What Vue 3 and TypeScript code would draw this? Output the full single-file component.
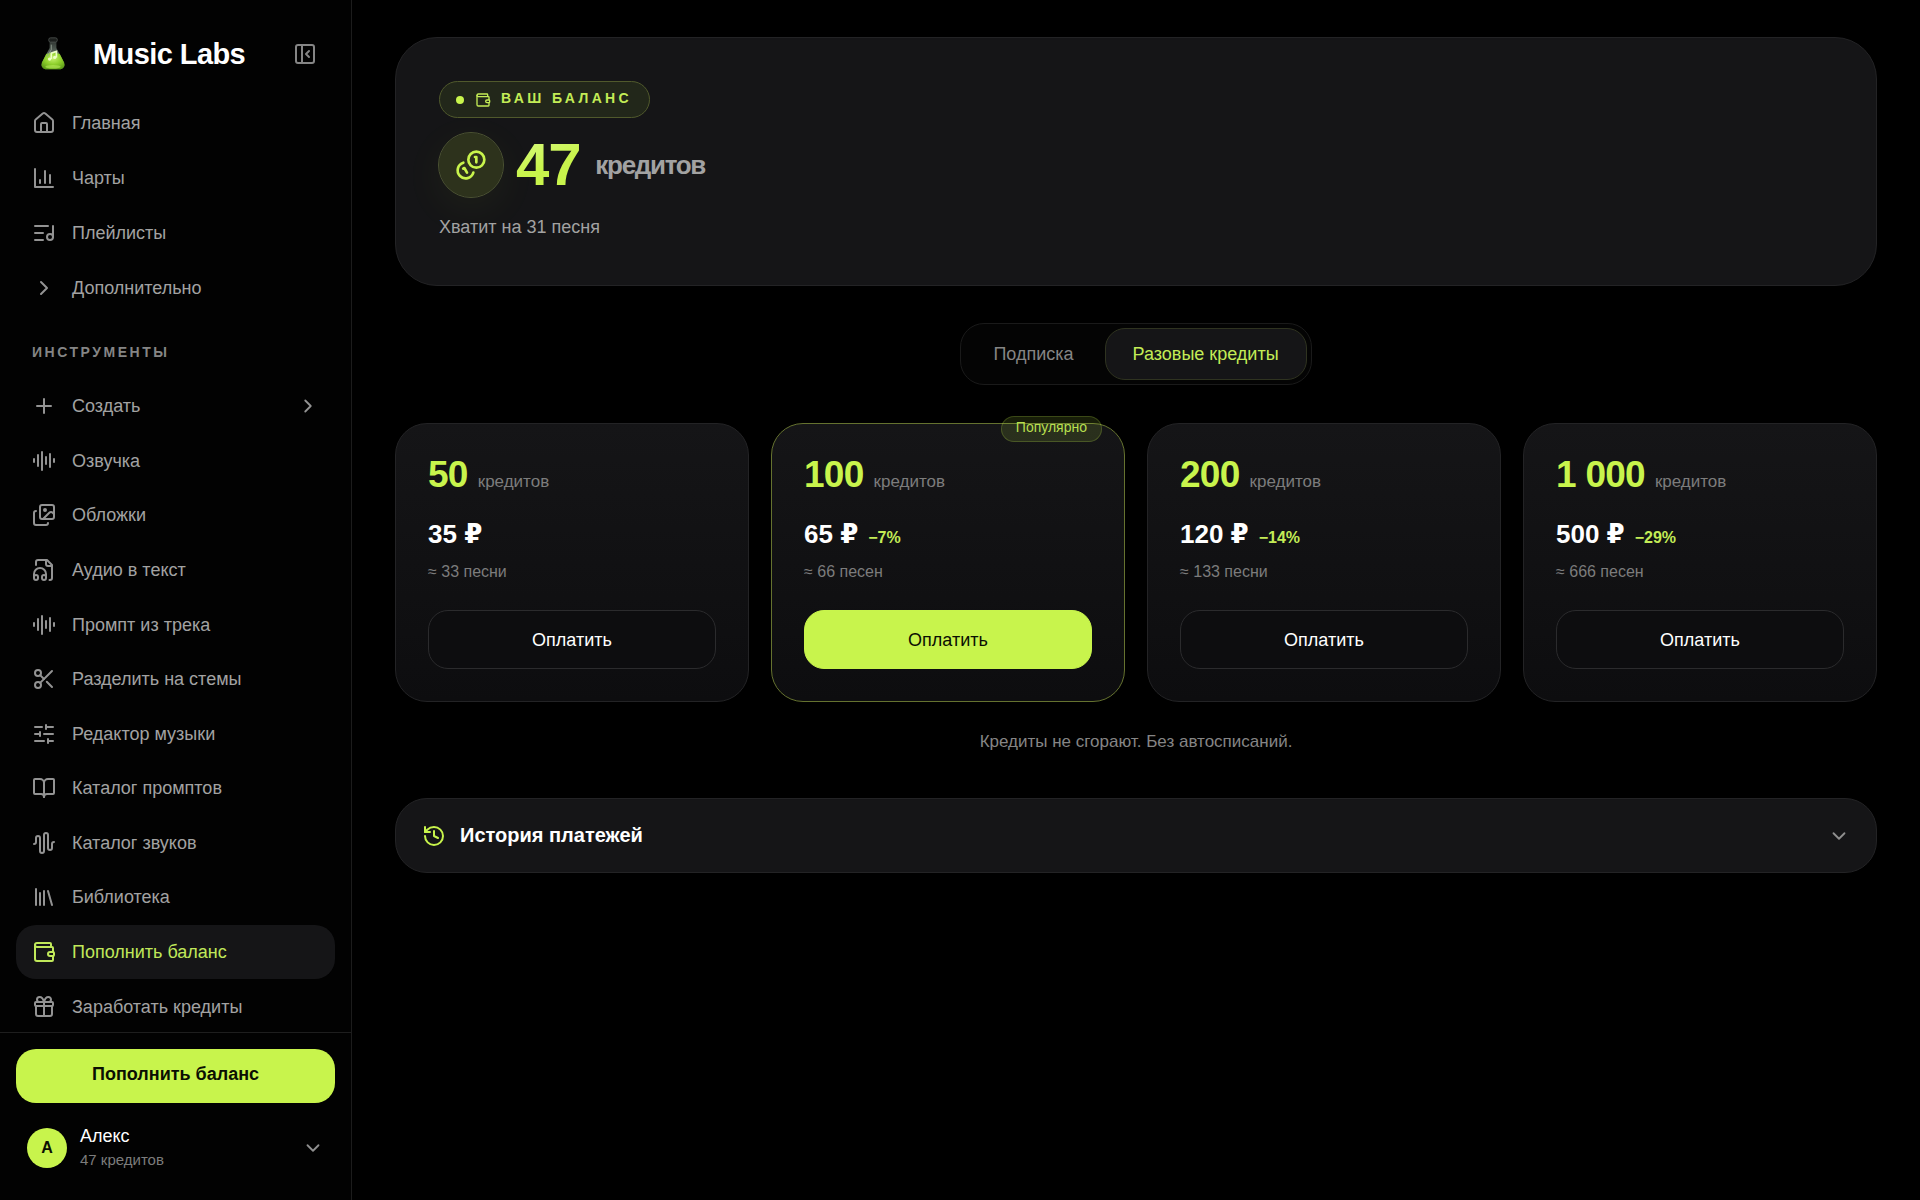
<script setup lang="ts">
import { ref } from 'vue'

interface NavItem {
  label: string
  icon: string
  active?: boolean
  expandable?: boolean
}

interface Plan {
  credits: string
  price: string
  discount?: string
  songs: string
  popular?: boolean
}

const icons: Record<string, string[]> = {
  home: [
    'M15 21v-8a1 1 0 0 0-1-1h-4a1 1 0 0 0-1 1v8',
    'M3 10a2 2 0 0 1 .709-1.528l7-5.999a2 2 0 0 1 2.582 0l7 5.999A2 2 0 0 1 21 10v9a2 2 0 0 1-2 2H5a2 2 0 0 1-2-2z',
  ],
  charts: ['M3 3v18h18', 'M18 17V9', 'M13 17V5', 'M8 17v-3'],
  playlists: ['M21 16V5', 'M11 12H3', 'M11 19H3', 'M16 5H3', 'M21 16a3 3 0 1 1-6 0 3 3 0 0 1 6 0z'],
  right: ['m9 18 6-6-6-6'],
  down: ['m6 9 6 6 6-6'],
  plus: ['M5 12h14', 'M12 5v14'],
  lines: ['M2 10v3', 'M6 6v11', 'M10 3v18', 'M14 8v7', 'M18 5v13', 'M22 10v3'],
  images: [
    'm22 11-1.296-1.296a2.4 2.4 0 0 0-3.408 0L11 16',
    'M4 8a2 2 0 0 0-2 2v10a2 2 0 0 0 2 2h10a2 2 0 0 0 2-2',
    'M14 7a1 1 0 1 1-2 0 1 1 0 0 1 2 0z',
    'M10 2h10a2 2 0 0 1 2 2v10a2 2 0 0 1-2 2H10a2 2 0 0 1-2-2V4a2 2 0 0 1 2-2z',
  ],
  fileAudio: [
    'M17.5 22h.5a2 2 0 0 0 2-2V7l-5-5H6a2 2 0 0 0-2 2v3',
    'M14 2v4a2 2 0 0 0 2 2h4',
    'M2 19a2 2 0 1 1 4 0v1a2 2 0 1 1-4 0v-4a6 6 0 0 1 12 0v4a2 2 0 1 1-4 0v-1a2 2 0 1 1 4 0',
  ],
  scissors: [
    'M9 6a3 3 0 1 1-6 0 3 3 0 0 1 6 0z',
    'M8.12 8.12 12 12',
    'M20 4 8.12 15.88',
    'M9 18a3 3 0 1 1-6 0 3 3 0 0 1 6 0z',
    'M14.8 14.8 20 20',
  ],
  sliders: ['M10 5H3', 'M12 19H3', 'M14 3v4', 'M16 17v4', 'M21 12h-9', 'M21 19h-5', 'M21 5h-7', 'M8 10v4', 'M8 12H3'],
  book: [
    'M12 7v14',
    'M3 18a1 1 0 0 1-1-1V4a1 1 0 0 1 1-1h5a4 4 0 0 1 4 4 4 4 0 0 1 4-4h5a1 1 0 0 1 1 1v13a1 1 0 0 1-1 1h-6a3 3 0 0 0-3 3 3 3 0 0 0-3-3z',
  ],
  waveform: [
    'M2 13a2 2 0 0 0 2-2V7a2 2 0 0 1 4 0v13a2 2 0 0 0 4 0V4a2 2 0 0 1 4 0v13a2 2 0 0 0 4 0v-4a2 2 0 0 1 2-2',
  ],
  library: ['m16 6 4 14', 'M12 6v14', 'M8 8v12', 'M4 4v16'],
  wallet: [
    'M19 7V4a1 1 0 0 0-1-1H5a2 2 0 0 0 0 4h15a1 1 0 0 1 1 1v4h-3a2 2 0 0 0 0 4h3a1 1 0 0 0 1-1v-2a1 1 0 0 0-1-1',
    'M3 5v14a2 2 0 0 0 2 2h15a1 1 0 0 0 1-1v-4',
  ],
  gift: [
    'M12 7v14',
    'M20 11v8a2 2 0 0 1-2 2H6a2 2 0 0 1-2-2v-8',
    'M7.5 7a1 1 0 0 1 0-5A4.8 8 0 0 1 12 7a4.8 8 0 0 1 4.5-5 1 1 0 0 1 0 5',
    'M4 7h16a1 1 0 0 1 1 1v2a1 1 0 0 1-1 1H4a1 1 0 0 1-1-1V8a1 1 0 0 1 1-1z',
  ],
  history: ['M3 12a9 9 0 1 0 9-9 9.75 9.75 0 0 0-6.74 2.74L3 8', 'M3 3v5h5', 'M12 7v5l4 2'],
  coins: [
    'M13.744 17.736a6 6 0 1 1-7.48-7.48',
    'M15 6h1v4',
    'm6.134 14.768.866-.5 2 3.464',
    'M22 8a6 6 0 1 1-12 0 6 6 0 0 1 12 0z',
  ],
  panel: ['M5 3h14a2 2 0 0 1 2 2v14a2 2 0 0 1-2 2H5a2 2 0 0 1-2-2V5a2 2 0 0 1 2-2z', 'M9 3v18', 'm16 15-3-3 3-3'],
}

const mainNav: NavItem[] = [
  { label: 'Главная', icon: 'home' },
  { label: 'Чарты', icon: 'charts' },
  { label: 'Плейлисты', icon: 'playlists' },
  { label: 'Дополнительно', icon: 'right' },
]

const tools: NavItem[] = [
  { label: 'Создать', icon: 'plus', expandable: true },
  { label: 'Озвучка', icon: 'lines' },
  { label: 'Обложки', icon: 'images' },
  { label: 'Аудио в текст', icon: 'fileAudio' },
  { label: 'Промпт из трека', icon: 'lines' },
  { label: 'Разделить на стемы', icon: 'scissors' },
  { label: 'Редактор музыки', icon: 'sliders' },
  { label: 'Каталог промптов', icon: 'book' },
  { label: 'Каталог звуков', icon: 'waveform' },
  { label: 'Библиотека', icon: 'library' },
  { label: 'Пополнить баланс', icon: 'wallet', active: true },
  { label: 'Заработать кредиты', icon: 'gift' },
]

const plans: Plan[] = [
  { credits: '50', price: '35', songs: '≈ 33 песни' },
  { credits: '100', price: '65', discount: '−7%', songs: '≈ 66 песен', popular: true },
  { credits: '200', price: '120', discount: '−14%', songs: '≈ 133 песни' },
  { credits: '1 000', price: '500', discount: '−29%', songs: '≈ 666 песен' },
]

const tabs = ['Подписка', 'Разовые кредиты']
const activeTab = ref(1)
</script>

<template>
  <div class="app">
    <aside class="sidebar">
      <header class="brand">
        <svg class="logo" viewBox="0 0 40 40" aria-hidden="true">
          <defs>
            <linearGradient id="glass" x1="0" y1="0" x2="0" y2="1">
              <stop offset="0" stop-color="#2b302d" />
              <stop offset="0.45" stop-color="#5d6a60" />
              <stop offset="1" stop-color="#4f7a22" />
            </linearGradient>
            <radialGradient id="liquid" cx="0.5" cy="0.35" r="0.7">
              <stop offset="0" stop-color="#c4f06a" />
              <stop offset="0.5" stop-color="#8fd02c" />
              <stop offset="1" stop-color="#5c9a18" />
            </radialGradient>
          </defs>
          <path d="M16 4h8v9l9 17q2 6-4 8H11q-6-2-4-8l9-17z" fill="url(#glass)" />
          <path d="M12 20q8-3 16 0l5 10q2 6-4 8H11q-6-2-4-8z" fill="url(#liquid)" />
          <rect x="15" y="1" width="10" height="5" rx="2" fill="#1c1f1d" stroke="#4c524e" />
          <path d="M18 9v6l-5 8" fill="none" stroke="#93a294" stroke-width="1" />
          <path d="M18 26v-7l6-2v7" fill="none" stroke="#edffc6" stroke-width="2" />
          <circle cx="16" cy="26" r="2" fill="#edffc6" />
          <circle cx="22" cy="24" r="2" fill="#edffc6" />
          <ellipse cx="20" cy="35" rx="9" ry="2" fill="#b9ec5a" opacity="0.6" />
        </svg>
        <span class="brand-name">Music Labs</span>
        <button class="collapse" type="button" aria-label="Свернуть меню">
          <svg class="icon" viewBox="0 0 24 24"><path v-for="d in icons.panel" :key="d" :d="d" /></svg>
        </button>
      </header>

      <nav class="nav">
        <a v-for="item in mainNav" :key="item.label" class="nav-item" href="#">
          <svg class="icon" viewBox="0 0 24 24"><path v-for="d in icons[item.icon]" :key="d" :d="d" /></svg>
          <span>{{ item.label }}</span>
        </a>
        <h2 class="nav-title">Инструменты</h2>
        <div class="tools">
          <a v-for="item in tools" :key="item.label" class="nav-item" :class="{ active: item.active }" href="#">
            <svg class="icon" viewBox="0 0 24 24"><path v-for="d in icons[item.icon]" :key="d" :d="d" /></svg>
            <span>{{ item.label }}</span>
            <svg v-if="item.expandable" class="icon small end" viewBox="0 0 24 24">
              <path v-for="d in icons.right" :key="d" :d="d" />
            </svg>
          </a>
        </div>
      </nav>

      <footer class="side-footer">
        <button class="topup" type="button">Пополнить баланс</button>
        <button class="user" type="button">
          <span class="avatar">А</span>
          <span class="user-text">
            <span class="user-name">Алекс</span>
            <span class="user-credits">47 кредитов</span>
          </span>
          <svg class="icon small end" viewBox="0 0 24 24"><path v-for="d in icons.down" :key="d" :d="d" /></svg>
        </button>
      </footer>
    </aside>

    <main class="content">
      <section class="hero">
        <div class="chip">
          <span class="dot"></span>
          <svg class="icon chip-icon" viewBox="0 0 24 24"><path v-for="d in icons.wallet" :key="d" :d="d" /></svg>
          <span class="chip-text">Ваш баланс</span>
        </div>
        <div class="balance">
          <span class="coin">
            <svg class="icon coin-icon" viewBox="0 0 24 24"><path v-for="d in icons.coins" :key="d" :d="d" /></svg>
          </span>
          <span class="amount">47</span>
          <span class="unit">кредитов</span>
        </div>
        <p class="hint">Хватит на 31 песня</p>
      </section>

      <div class="tabs" role="tablist">
        <button
          v-for="(tab, i) in tabs"
          :key="tab"
          class="tab"
          :class="{ selected: activeTab === i }"
          type="button"
          role="tab"
          :aria-selected="activeTab === i"
          @click="activeTab = i"
        >
          {{ tab }}
        </button>
      </div>

      <section class="plans">
        <article v-for="plan in plans" :key="plan.credits" class="plan" :class="{ popular: plan.popular }">
          <span v-if="plan.popular" class="badge">Популярно</span>
          <div class="line">
            <span class="credits">{{ plan.credits }}</span>
            <span class="credits-unit">кредитов</span>
          </div>
          <div class="line price-line">
            <span class="price">{{ plan.price }} <span class="currency">₽</span></span>
            <span v-if="plan.discount" class="discount">{{ plan.discount }}</span>
          </div>
          <p class="songs">{{ plan.songs }}</p>
          <button class="pay" type="button">Оплатить</button>
        </article>
      </section>

      <p class="note">Кредиты не сгорают. Без автосписаний.</p>

      <button class="history" type="button">
        <svg class="icon lime" viewBox="0 0 24 24"><path v-for="d in icons.history" :key="d" :d="d" /></svg>
        <span class="history-title">История платежей</span>
        <svg class="icon small end" viewBox="0 0 24 24"><path v-for="d in icons.down" :key="d" :d="d" /></svg>
      </button>
    </main>
  </div>
</template>

<style>
body {
  margin: 0;
  background: #000;
}
</style>

<style scoped>
.app {
  --lime: #c8f44c;
  --line: #232325;
  display: flex;
  min-height: 100vh;
  background: #000;
  color: #fff;
  font-family: "Liberation Sans", Arial, sans-serif;
  font-size: 18px;
  line-height: 24px;
}

.app * {
  box-sizing: border-box;
}

button {
  margin: 0;
  padding: 0;
  border: 0;
  background: none;
  color: inherit;
  font: inherit;
  cursor: pointer;
}

p,
h2 {
  margin: 0;
}

.icon {
  flex: none;
  width: 24px;
  height: 24px;
  fill: none;
  stroke: currentColor;
  stroke-width: 2;
  stroke-linecap: round;
  stroke-linejoin: round;
}

.icon.small {
  width: 22px;
  height: 22px;
}

.end {
  margin-left: auto;
}

.lime {
  color: var(--lime);
}

/* Sidebar */
.sidebar {
  position: sticky;
  top: 0;
  display: flex;
  flex: none;
  flex-direction: column;
  width: 352px;
  height: 100vh;
  border-right: 1px solid #1c1c1c;
  background: #020202;
}

.brand {
  display: flex;
  align-items: center;
  flex: none;
  height: 95px;
  padding: 12px 34px 0 33px;
}

.logo {
  width: 40px;
  height: 40px;
  padding: 3px;
  margin-right: 20px;
}

.brand-name {
  font-size: 29px;
  font-weight: 700;
  line-height: 36px;
  letter-spacing: -0.02em;
}

.collapse {
  display: flex;
  margin-left: auto;
  color: #858585;
}

.nav {
  display: flex;
  flex: 1;
  flex-direction: column;
  min-height: 0;
  padding: 0 16px;
  overflow: hidden;
}

.nav-item {
  display: flex;
  align-items: center;
  flex: none;
  gap: 16px;
  height: 55px;
  padding: 0 16px;
  border-radius: 20px;
  color: #a2a2a2;
  text-decoration: none;
}

.nav-item .icon {
  color: #939393;
}

.nav-item.active,
.nav-item.active .icon {
  color: #c0e85a;
}

.nav-item.active {
  background: #151517;
}

.nav-title {
  padding: 27px 16px 17px;
  color: #858585;
  font-size: 14px;
  font-weight: 700;
  line-height: 20px;
  letter-spacing: 0.18em;
  text-transform: uppercase;
}

.tools {
  display: flex;
  flex: 1;
  flex-direction: column;
  margin-bottom: -2px;
}

.tools .nav-item {
  flex: 1 0 48px;
  height: auto;
}

.side-footer {
  flex: none;
  padding: 16px 16px 23px;
  border-top: 1px solid #1e1e1e;
}

.topup {
  width: 100%;
  height: 54px;
  padding-bottom: 4px;
  border-radius: 20px;
  background: var(--lime);
  color: #0b0f02;
  font-weight: 700;
}

.user {
  display: flex;
  align-items: center;
  width: 100%;
  height: 58px;
  margin-top: 16px;
  padding: 0 11px;
  text-align: left;
}

.user .icon {
  color: #8f8f8f;
}

.avatar {
  display: flex;
  align-items: center;
  justify-content: center;
  width: 40px;
  height: 40px;
  margin-right: 13px;
  border-radius: 50%;
  background: var(--lime);
  color: #0b0f02;
  font-size: 16px;
  font-weight: 700;
}

.user-text {
  display: flex;
  flex-direction: column;
}

.user-credits {
  color: #7c7c7c;
  font-size: 15px;
}

/* Content */
.content {
  flex: 1;
  min-width: 0;
  padding: 37px 43px;
}

.hero {
  padding: 43px 43px 46px;
  border: 1px solid var(--line);
  border-radius: 42px;
  background: #151517;
}

.chip {
  display: flex;
  align-items: center;
  width: fit-content;
  height: 37px;
  padding: 0 17px 0 16px;
  border: 1px solid #50592c;
  border-radius: 19px;
  background: #22271a;
  color: #c3ec56;
  font-size: 14px;
  font-weight: 700;
  letter-spacing: 0.24em;
  text-transform: uppercase;
}

.chip-text {
  padding-bottom: 3px;
}

.dot {
  width: 8px;
  height: 8px;
  margin-right: 11px;
  border-radius: 50%;
  background: var(--lime);
}

.chip-icon {
  width: 16px;
  height: 16px;
  margin-right: 10px;
}

.balance {
  display: flex;
  align-items: center;
  height: 66px;
  margin-top: 14px;
}

.coin {
  display: flex;
  align-items: center;
  justify-content: center;
  width: 64px;
  height: 64px;
  outline: 1px solid #4b5232;
  border-radius: 50%;
  background: #2d321c;
  box-shadow: 0 11px 44px rgba(200, 244, 76, 0.06);
  color: var(--lime);
}

.coin-icon {
  width: 32px;
  height: 32px;
}

.amount {
  margin-left: 13px;
  background: linear-gradient(160deg, #dcfb8e, var(--lime) 50%);
  background-clip: text;
  color: transparent;
  font-size: 60px;
  font-weight: 700;
  line-height: 68px;
  letter-spacing: -0.02em;
}

.unit {
  margin-left: 15px;
  color: #a2a2a2;
  font-size: 26px;
  font-weight: 700;
  line-height: 32px;
  letter-spacing: -0.05em;
}

.hint {
  margin-top: 17px;
  color: #a2a2a2;
}

.tabs {
  display: flex;
  gap: 3px;
  width: fit-content;
  margin: 37px auto 0;
  padding: 4px;
  border: 1px solid #1a1a1a;
  border-radius: 24px;
  background: #040404;
}

.tab {
  height: 52px;
  padding: 0 27px;
  border: 1px solid transparent;
  border-radius: 20px;
  color: #858585;
}

.tab.selected {
  border-color: #2f3320;
  background: #151517;
  color: #c3ec56;
}

.plans {
  display: grid;
  grid-template-columns: repeat(4, minmax(0, 1fr));
  gap: 22px;
  margin-top: 38px;
}

.plan {
  position: relative;
  padding: 32px;
  border: 1px solid var(--line);
  border-radius: 32px;
  background: linear-gradient(180deg, #151517, #0d0d0f);
}

.plan.popular {
  border-color: #65722f;
}

.badge {
  position: absolute;
  top: -8px;
  right: 22px;
  height: 26px;
  padding: 0 14px;
  border: 1px solid rgba(200, 244, 76, 0.2);
  border-radius: 13px;
  background: rgba(200, 244, 76, 0.12);
  color: #b7df4e;
  font-size: 14px;
  line-height: 20px;
}

.line {
  display: flex;
  align-items: baseline;
  gap: 10px;
}

.credits {
  color: var(--lime);
  font-size: 37px;
  font-weight: 700;
  line-height: 38px;
  letter-spacing: -0.02em;
}

.credits-unit {
  color: #7c7c7c;
  font-size: 17px;
}

.price-line {
  margin-top: 22px;
}

.price {
  font-size: 26px;
  font-weight: 700;
  line-height: 36px;
}

.currency {
  font-family: "DejaVu Sans", sans-serif;
  line-height: 24px;
}

.discount {
  color: #c3ec56;
  font-size: 16px;
  font-weight: 700;
}

.songs {
  margin-top: 8px;
  color: #7c7c7c;
  font-size: 16px;
}

.pay {
  width: 100%;
  height: 59px;
  margin-top: 26px;
  border: 1px solid #2b2b2d;
  border-radius: 20px;
  background: #0d0d0f;
}

.popular .pay {
  border-color: var(--lime);
  background: var(--lime);
  color: #0b0f02;
}

.note {
  margin-top: 28px;
  color: #858585;
  font-size: 17px;
  text-align: center;
}

.history {
  display: flex;
  align-items: center;
  gap: 14px;
  width: 100%;
  height: 75px;
  margin-top: 44px;
  padding: 0 26px;
  border: 1px solid var(--line);
  border-radius: 32px;
  background: #151517;
  font-size: 20px;
  font-weight: 700;
}

.history-title {
  padding-bottom: 2px;
}

.history .end {
  color: #8f8f8f;
}
</style>
